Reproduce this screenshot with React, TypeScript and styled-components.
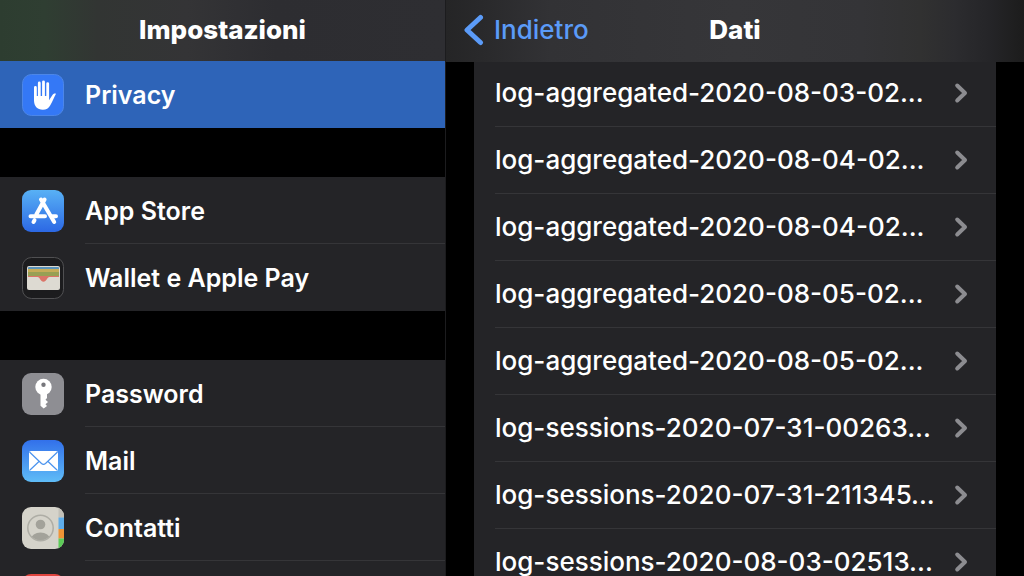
import React from "react";
import styled, { createGlobalStyle } from "styled-components";

const GlobalStyle = createGlobalStyle`
  * { box-sizing: border-box; }
  body {
    margin: 0;
    background: #000;
    color: #fff;
    font-family: Inter, "Liberation Sans", sans-serif;
    overflow: hidden;
  }
  ul { list-style: none; margin: 0; padding: 0; }
  h1, h2 { margin: 0; }
  svg { display: block; flex: none; }
`;

const Screen = styled.div`
  display: grid;
  grid-template-columns: 445fr 579fr;
  height: 100vh;
  overflow: hidden;
`;

const Sidebar = styled.nav`
  min-width: 0;
  overflow: hidden;
`;

const SidebarHeader = styled.header`
  display: flex;
  align-items: center;
  justify-content: center;
  height: 61px;
  padding-bottom: 2px;
  background: linear-gradient(90deg, #2d3d30 0%, #2f3e32 10%, #323533 22%, #343436 42%, #2d2d31 62%, #2e2e32 100%);
`;

const Title = styled.h1`
  font-size: 26px;
  line-height: 32px;
  font-weight: 800;
`;

const Group = styled.ul`
  background: #242427;
  & + & { margin-top: 49px; }
`;

const SettingLink = styled.a<{ $selected?: boolean }>`
  display: flex;
  align-items: center;
  gap: 21px;
  height: 67px;
  padding-left: 22px;
  color: #fff;
  text-decoration: none;
  background: ${(p) => (p.$selected ? "#2e64b8" : "transparent")};
`;

const SettingLabel = styled.span<{ $divided?: boolean }>`
  display: flex;
  align-items: center;
  flex: 1;
  align-self: stretch;
  padding-top: 2px;
  font-size: 25px;
  line-height: 32px;
  font-weight: 600;
  border-bottom: 1px solid ${(p) => (p.$divided ? "#353538" : "transparent")};
`;

const Detail = styled.main`
  min-width: 0;
  border-left: 1px solid #1c1c1e;
  overflow: hidden;
`;

const DetailHeader = styled.header`
  display: grid;
  grid-template-columns: 1fr auto 1fr;
  align-items: center;
  position: relative;
  z-index: 1;
  height: 62px;
  margin-bottom: -2px;
  padding: 0 18px 2px;
  background: linear-gradient(90deg, #252526 0%, #29292b 6%, #323235 18%, #363639 50%, #343437 72%, #313131 82%, #2c2c2f 88%, #252528 94%, #1c1c1c 100%);
`;

const BackButton = styled.button`
  display: flex;
  align-items: center;
  gap: 10px;
  padding: 0;
  border: 0;
  background: none;
  color: #5b9bf8;
  font: 500 26px/32px Inter, "Liberation Sans", sans-serif;
`;

const FileList = styled.ul`
  margin: 0 28px;
  background: #242427;
`;

const FileLink = styled.a`
  display: flex;
  align-items: center;
  justify-content: space-between;
  height: 67px;
  margin-left: 21px;
  padding-right: 28px;
  border-bottom: 1px solid #353538;
  color: #fff;
  font-size: 26px;
  line-height: 32px;
  font-weight: 500;
  white-space: nowrap;
  text-decoration: none;
`;

type IconName = "privacy" | "store" | "wallet" | "password" | "mail" | "contacts" | "calendar";

const glyphs: Record<IconName, React.ReactNode> = {
  privacy: (
    <>
      <rect x=".5" y=".5" width="41" height="41" rx="9" fill="#3478f6" stroke="#4c86e8" />
      <g stroke="#fff" strokeWidth="2.8" strokeLinecap="round" fill="none">
        <path d="M13.4 13.5V26M17.300 9V25M21.500 7.800V25M25.700 9.600V25" />
      </g>
      <path d="M12 22h15v4.300l3.300-5.100c.9-1.400 2.300-2 3.700-1.400-1.900 3.200-3.600 8-5.700 11.400-1.600 3-4.200 4.600-7.400 4.600-5.700 0-8.900-3.800-8.900-9.500z" fill="#fff" />
    </>
  ),
  store: (
    <>
      <rect width="42" height="42" rx="9" fill="url(#storeFill)" />
      <g stroke="#fff" strokeWidth="4" strokeLinecap="round" fill="none">
        <path d="M22.600 9.500L14.300 24.500M19 9.500L32.200 32M8.500 26.300H23M30 26.300H34M12.500 30.300L11.500 32" />
      </g>
    </>
  ),
  wallet: (
    <>
      <rect x=".5" y=".5" width="41" height="41" rx="9" fill="#1c1c1e" stroke="#505052" />
      <rect x="5" y="9" width="33" height="24" rx="2" fill="#dddad2" />
      <path d="M7 10h29a1 1 0 0 1 1 1v1H6v-1a1 1 0 0 1 1-1z" fill="#5b93b8" />
      <path d="M6 12h31v3.500H6z" fill="#c6ac58" />
      <path d="M6 15h31v4H6z" fill="#98a054" />
      <path d="M6 19h31v1H27.500c-2.500 0-3 4.800-6 4.800s-3.500-4.800-6-4.800H6z" fill="#db7468" />
    </>
  ),
  password: (
    <>
      <rect width="42" height="42" rx="9" fill="#8e8e93" />
      <path d="M18.500 20h6.500v5l-1.500 1.800 2.500 2.200-2.500 2.200 1.500 1.800-3.300 2.500-3.200-2.700z" fill="#fff" />
      <circle cx="21.500" cy="14" r="8.200" fill="#fff" />
      <circle cx="21.500" cy="11.800" r="2.200" fill="#77777c" />
    </>
  ),
  mail: (
    <>
      <rect width="42" height="42" rx="9" fill="url(#mailFill)" />
      <rect x="7" y="11" width="29" height="20" rx="2" fill="#fff" />
      <path d="M7.500 12L19.500 23.500q2 1.800 4 0l12-11.500M8 30l9.500-9M35 30l-9.500-9" stroke="#4a93ee" strokeWidth="1.200" fill="none" />
    </>
  ),
  contacts: (
    <>
      <clipPath id="contactsTile"><rect width="42" height="42" rx="9" /></clipPath>
      <g clipPath="url(#contactsTile)">
        <rect width="42" height="42" fill="#d5d3ca" />
        <path d="M36.500 0H42v10.500h-5.500z" fill="#c2c0b7" />
        <path d="M36.500 10.500H42V22h-5.500z" fill="#5fadea" />
        <path d="M36.500 22H42v9.500h-5.500z" fill="#ef9436" />
        <path d="M36.500 31.500H42V42h-5.500z" fill="#5dcc58" />
      </g>
      <clipPath id="contactsFace"><circle cx="18.500" cy="21" r="12.500" /></clipPath>
      <g clipPath="url(#contactsFace)" fill="#a3a29a">
        <circle cx="18.500" cy="17.500" r="4.800" />
        <ellipse cx="18.500" cy="32" rx="9.500" ry="6.500" />
      </g>
      <circle cx="18.500" cy="21" r="12.700" stroke="#aeada5" strokeWidth="1.500" fill="none" />
    </>
  ),
  calendar: <rect width="42" height="42" rx="9" fill="#e0443e" />,
};

const TileIcon = ({ name }: { name: IconName }) => (
  <svg width="42" height="42" viewBox="0 0 42 42" aria-hidden="true">
    <defs>
      <linearGradient id="storeFill" x2="0" y2="1">
        <stop stopColor="#58b1f5" />
        <stop offset="1" stopColor="#2c68e4" />
      </linearGradient>
      <linearGradient id="mailFill" x2="0" y2="1">
        <stop stopColor="#3270ea" />
        <stop offset="1" stopColor="#5fbcf7" />
      </linearGradient>
    </defs>
    {glyphs[name]}
  </svg>
);

const groups: { icon: IconName; label: string; selected?: boolean }[][] = [
  [{ icon: "privacy", label: "Privacy", selected: true }],
  [
    { icon: "store", label: "App Store" },
    { icon: "wallet", label: "Wallet e Apple Pay" },
  ],
  [
    { icon: "password", label: "Password" },
    { icon: "mail", label: "Mail" },
    { icon: "contacts", label: "Contatti" },
    { icon: "calendar", label: "" },
  ],
];

const files = [
  "log-aggregated-2020-08-03-02...",
  "log-aggregated-2020-08-04-02...",
  "log-aggregated-2020-08-04-02...",
  "log-aggregated-2020-08-05-02...",
  "log-aggregated-2020-08-05-02...",
  "log-sessions-2020-07-31-00263...",
  "log-sessions-2020-07-31-211345...",
  "log-sessions-2020-08-03-02513...",
];

export default function App() {
  return (
    <>
      <GlobalStyle />
      <Screen>
        <Sidebar>
          <SidebarHeader>
            <Title>Impostazioni</Title>
          </SidebarHeader>
          {groups.map((items, g) => (
            <Group key={g}>
              {items.map((item, i) => (
                <li key={item.icon}>
                  <SettingLink href={"#" + item.icon} $selected={item.selected}>
                    <TileIcon name={item.icon} />
                    <SettingLabel $divided={i < items.length - 1}>{item.label}</SettingLabel>
                  </SettingLink>
                </li>
              ))}
            </Group>
          ))}
        </Sidebar>
        <Detail>
          <DetailHeader>
            <BackButton type="button">
              <svg width="20" height="32" viewBox="0 0 20 32" aria-hidden="true">
                <path d="M16.500 3.500L3 16l13.500 12.500" stroke="currentColor" strokeWidth="5" strokeLinecap="round" strokeLinejoin="round" fill="none" />
              </svg>
              Indietro
            </BackButton>
            <Title as="h2">Dati</Title>
          </DetailHeader>
          <FileList>
            {files.map((file, i) => (
              <li key={i}>
                <FileLink href={"#file-" + i}>
                  {file}
                  <svg width="14" height="22" viewBox="0 0 14 22" aria-hidden="true">
                    <path d="M3.200 3.500l7.800 7.500-7.800 7.500" stroke="#8c8c90" strokeWidth="4" strokeLinecap="round" strokeLinejoin="round" fill="none" />
                  </svg>
                </FileLink>
              </li>
            ))}
          </FileList>
        </Detail>
      </Screen>
    </>
  );
}
